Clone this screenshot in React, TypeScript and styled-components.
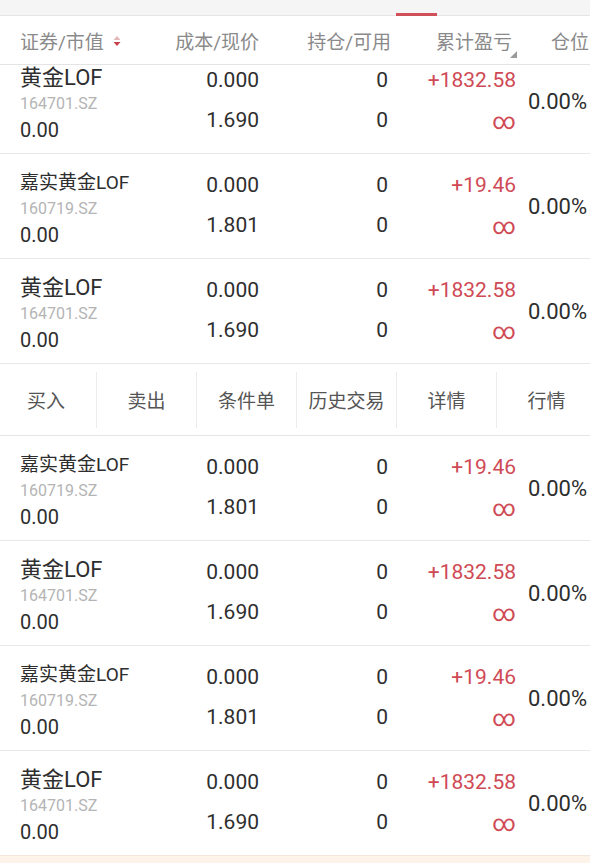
import styled, { createGlobalStyle } from "styled-components";

const GlobalStyle = createGlobalStyle`
  html, body {
    margin: 0;
    padding: 0;
    background: #ffffff;
  }
  body {
    width: 590px;
    height: 863px;
    overflow: hidden;
    font-family: Roboto, "Noto Sans CJK SC", "Noto Sans", sans-serif;
    color: #333333;
  }
`;

type Holding = {
  name: string;
  code: string;
  value: string;
  cost: string;
  price: string;
  hold: string;
  avail: string;
  profit: string;
  ratio: string;
  small?: boolean;
};

const gold: Holding = {
  name: "黄金LOF",
  code: "164701.SZ",
  value: "0.00",
  cost: "0.000",
  price: "1.690",
  hold: "0",
  avail: "0",
  profit: "+1832.58",
  ratio: "0.00%",
};

const jiashi: Holding = {
  name: "嘉实黄金LOF",
  code: "160719.SZ",
  value: "0.00",
  cost: "0.000",
  price: "1.801",
  hold: "0",
  avail: "0",
  profit: "+19.46",
  ratio: "0.00%",
  small: true,
};

const topRows = [gold, jiashi, gold];
const bottomRows = [jiashi, gold, jiashi, gold];
const actions = ["买入", "卖出", "条件单", "历史交易", "详情", "行情"];

export default function App() {
  return (
    <>
      <GlobalStyle />
      <Page>
        <TopBar>
          <TabIndicator />
        </TopBar>
        <Header>
          <HeadCell>
            证券/市值
            <SortIcon width="8" height="12" viewBox="0 0 8 12">
              <path d="M4 1 L7.5 5 L0.5 5 Z" fill="#e2b8bb" />
              <path d="M4 11 L7.5 7 L0.5 7 Z" fill="#c9414b" />
            </SortIcon>
          </HeadCell>
          <HeadCell $right>成本/现价</HeadCell>
          <HeadCell $right>持仓/可用</HeadCell>
          <HeadCell $right $shift={4}>
            累计盈亏
            <CornerIcon width="7" height="7" viewBox="0 0 7 7">
              <path d="M7 0 L7 7 L0 7 Z" fill="#9a9a9a" />
            </CornerIcon>
          </HeadCell>
          <HeadCell $indent={35}>仓位</HeadCell>
        </Header>
        <List>
          <Scroller>
            {topRows.map((r, i) => (
              <HoldingRow key={"t" + i} row={r} />
            ))}
            <ActionBar>
              {actions.map((a, i) => (
                <ActionButton key={a} $first={i === 0}>
                  {a}
                </ActionButton>
              ))}
            </ActionBar>
            {bottomRows.map((r, i) => (
              <HoldingRow key={"b" + i} row={r} />
            ))}
          </Scroller>
        </List>
        <BottomBand />
      </Page>
    </>
  );
}

const HoldingRow = ({ row }: { row: Holding }) => (
  <Row>
    <NameCol>
      <Name $small={row.small}>{row.name}</Name>
      <Code>{row.code}</Code>
      <Value>{row.value}</Value>
    </NameCol>
    <NumCol>
      <Num>{row.cost}</Num>
      <Num>{row.price}</Num>
    </NumCol>
    <NumCol>
      <Num>{row.hold}</Num>
      <Num>{row.avail}</Num>
    </NumCol>
    <NumCol>
      <Num $red>{row.profit}</Num>
      <Infinity>∞</Infinity>
    </NumCol>
    <Ratio>{row.ratio}</Ratio>
  </Row>
);

const Page = styled.div`
  width: 590px;
  height: 863px;
  display: flex;
  flex-direction: column;
  overflow: hidden;
  background: #ffffff;
`;

const TopBar = styled.div`
  height: 15px;
  flex-shrink: 0;
  background: #f5f5f5;
  border-bottom: 1px solid #e6e6e6;
  display: flex;
  align-items: flex-end;
  padding-left: 396px;
`;

const TabIndicator = styled.div`
  width: 41px;
  height: 3px;
  background: #d0505a;
  margin-bottom: -1px;
`;

const Header = styled.div`
  height: 48px;
  flex-shrink: 0;
  display: grid;
  grid-template-columns: 140px 99px 132px 125px 80px;
  padding-left: 20px;
  align-items: center;
  border-bottom: 1px solid #e4e4e4;
  background: #ffffff;
  position: relative;
  z-index: 2;
`;

const HeadCell = styled.div<{ $right?: boolean; $shift?: number; $indent?: number }>`
  display: flex;
  align-items: center;
  justify-content: ${(p) => (p.$right ? "flex-end" : "flex-start")};
  padding-left: ${(p) => p.$indent ?? 0}px;
  padding-right: ${(p) => p.$shift ?? 0}px;
  font-size: 19px;
  color: #8a8a8a;
  white-space: nowrap;
  position: relative;
`;

const SortIcon = styled.svg`
  margin-left: 9px;
  margin-top: 2px;
`;

const CornerIcon = styled.svg`
  position: absolute;
  right: -1px;
  bottom: -4px;
`;

const List = styled.div`
  flex: 1;
  overflow: hidden;
`;

const Scroller = styled.div`
  margin-top: -16px;
`;

const Row = styled.div`
  height: 104px;
  border-bottom: 1px solid #e8e8e8;
  display: grid;
  grid-template-columns: 140px 99px 129px 128px 82px;
  padding-left: 20px;
  white-space: nowrap;
`;

const NameCol = styled.div`
  display: flex;
  flex-direction: column;
  padding-top: 15px;
`;

const Name = styled.div<{ $small?: boolean }>`
  height: 28px;
  line-height: 28px;
  font-size: ${(p) => (p.$small ? "19px" : "22px")};
  color: #2e2e2e;
`;

const Code = styled.div`
  height: 24px;
  line-height: 24px;
  font-size: 16px;
  color: #b4b4b4;
`;

const Value = styled.div`
  height: 28px;
  line-height: 28px;
  font-size: 20px;
  color: #2e2e2e;
`;

const NumCol = styled.div`
  display: flex;
  flex-direction: column;
  align-items: flex-end;
  padding-top: 11px;
`;

const Num = styled.div<{ $red?: boolean }>`
  height: 40px;
  line-height: 40px;
  font-size: 21px;
  color: ${(p) => (p.$red ? "#cf4a55" : "#2e2e2e")};
`;

const Infinity = styled.div`
  height: 40px;
  line-height: 43px;
  font-size: 23px;
  color: #cf4a55;
  font-family: Roboto, "Noto Sans CJK SC", sans-serif;
`;

const Ratio = styled.div`
  display: flex;
  align-items: center;
  padding-left: 12px;
  font-size: 22px;
  color: #2e2e2e;
`;

const ActionBar = styled.div`
  width: 600px;
  height: 71px;
  margin-left: -4px;
  display: grid;
  grid-template-columns: repeat(6, 100px);
  align-items: center;
  border-bottom: 1px solid #e6e6e6;
  background: #ffffff;
`;

const ActionButton = styled.div<{ $first?: boolean }>`
  height: 56px;
  display: flex;
  align-items: center;
  justify-content: center;
  font-size: 19px;
  color: #555555;
  border-left: ${(p) => (p.$first ? "none" : "1px solid #ececec")};
`;

const BottomBand = styled.div`
  height: 7px;
  flex-shrink: 0;
  background: #fdf3e9;
  border-top: 1px solid #f3e6da;
`;
